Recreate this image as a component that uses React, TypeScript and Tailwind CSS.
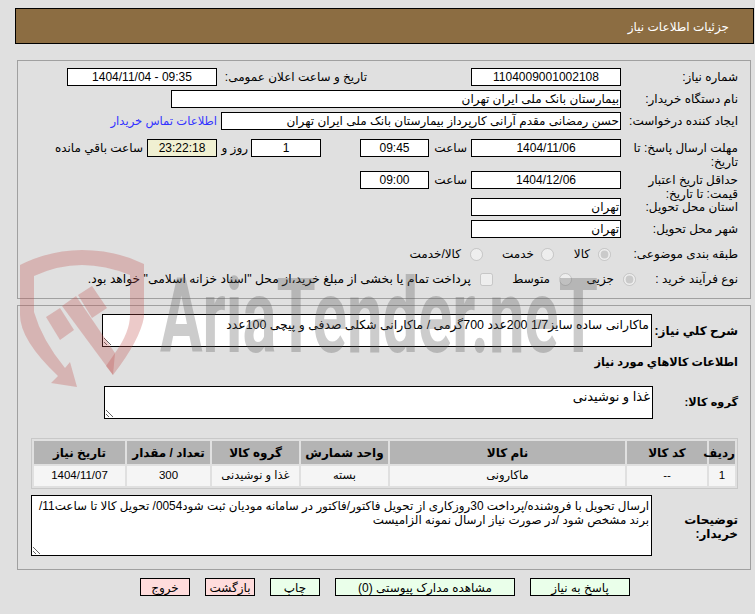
import React, { FC, ReactNode } from 'react';

const boxClass = 'h-[18px] shrink-0 border border-black bg-white leading-[16px] whitespace-nowrap overflow-hidden';

const Box: FC<{ w: string; className?: string; children?: ReactNode }> = ({ w, className, children }) => (
    <div className={`${boxClass} ${w} ${className ?? 'text-center text-[12px]'}`}>{children}</div>
);

const Label: FC<{ children: ReactNode }> = ({ children }) => (
    <div className="w-[117px] shrink-0 text-[12px] leading-[14px] pt-[2px]">{children}</div>
);

const Radio: FC<{ checked?: boolean }> = ({ checked }) => (
    <input type="radio" disabled checked={!!checked} readOnly className="m-0 h-[13px] w-[13px] shrink-0" />
);

const columns = [
    { title: 'رديف', value: '1', w: 'w-[26px]' },
    { title: 'کد کالا', value: '--', w: 'w-[80px]' },
    { title: 'نام کالا', value: 'ماکارونی', w: 'w-[235px]' },
    { title: 'واحد شمارش', value: 'بسته', w: 'w-[87px]' },
    { title: 'گروه کالا', value: 'غذا و نوشیدنی', w: 'w-[87px]' },
    { title: 'تعداد / مقدار', value: '300', w: 'w-[83px]' },
    { title: 'تاریخ نیاز', value: '1404/11/07', w: 'w-[91px]' },
];

const textareaClass = 'shrink-0 border border-black bg-white leading-[14px] px-[2px] py-[3px] outline-none overflow-hidden';

const Watermark: FC = () => (
    <svg dir="ltr" className="absolute left-0 top-0 pointer-events-none" width="755" height="614" viewBox="0 0 755 614">
        <g fill="#c0504d" fillOpacity="0.3">
            <path d="M20 265 Q50 250 82 250 Q116 250 144 264 L144 317 Q140 340 113 375 L106 366 L115 353 Q130 332 130 315 L130 275 Q105 265 82 265 Q58 265 34 276 L34 312 Q42 340 65 368 L70 362 L77 387 L51 383 L58 376 Q20 340 20 315 Z" />
            <path d="M46 317 L60 308 L74 330 L60 340 Z" />
            <path d="M62 306 L76 296 L115 353 L113 375 Z" />
            <path d="M78 295 L92 286 L107 308 L92 318 Z" />
        </g>
        <text x="160" y="352" direction="ltr" textAnchor="start" fontFamily="Roboto, sans-serif" fontWeight="700" fontSize="104" textLength="438" lengthAdjust="spacingAndGlyphs" fill="#555555" fillOpacity="0.3">
            AriaTender.neT
        </text>
    </svg>
);

export default function App() {
    return (
        <div dir="rtl" className="relative h-[614px] w-[755px] overflow-hidden bg-[#e0e0e0] text-black font-['Liberation_Sans','DejaVu_Sans',sans-serif]">
            <div className="h-2" />
            {/* Header */}
            <div className="ml-[15px] mr-px h-[36px] border border-black bg-[#8c6d42] pr-[24px] text-[12px] leading-[37px] text-white">
                جزئیات اطلاعات نیاز
            </div>

            {/* Main info */}
            <div className="ml-[17px] mr-[4px] mt-[16px] h-[239px] border border-[#a0a0a0] pr-[12px] pt-[7px]">
                <div className="flex h-[18px]">
                    <Label>شماره نیاز:</Label>
                    <Box w="w-[150px]">1104009001002108</Box>
                    <div className="mr-[104px] w-[145px] shrink-0 text-[12px] leading-[14px] pt-[2px] whitespace-nowrap">تاریخ و ساعت اعلان عمومی:</div>
                    <Box w="w-[150px]" className="mr-[5px] text-center text-[12px]"><span dir="ltr">1404/11/04 - 09:35</span></Box>
                </div>
                <div className="mt-[4px] flex h-[18px]">
                    <Label>نام دستگاه خریدار:</Label>
                    <Box w="w-[450px]" className="pr-px text-[12px]">بیمارستان بانک ملی ایران تهران</Box>
                </div>
                <div className="mt-[4px] flex h-[18px]">
                    <Label>ایجاد کننده درخواست:</Label>
                    <Box w="w-[400px]" className="pr-px text-[12px]">حسن رمضانی مقدم آرانی کارپرداز بیمارستان بانک ملی ایران تهران</Box>
                    <a className="mr-[4px] whitespace-nowrap text-[11.6px] leading-[14px] pt-[2px] text-[#3333ff]">اطلاعات تماس خریدار</a>
                </div>
                <div className="mt-[9px] flex h-[18px]">
                    <Label>مهلت ارسال پاسخ: تا تاریخ:</Label>
                    <Box w="w-[150px]">1404/11/06</Box>
                    <div className="mr-[4px] w-[34px] shrink-0 pt-[2px] text-[12px] leading-[14px]">ساعت</div>
                    <Box w="w-[69px]" className="mr-[4px] text-center text-[12px]">09:45</Box>
                    <Box w="w-[70px]" className="mr-[39px] text-center text-[12px]">1</Box>
                    <div className="mr-[3px] w-[26px] shrink-0 whitespace-nowrap pt-[2px] text-[12px] leading-[14px]">روز و</div>
                    <Box w="w-[70px]" className="mr-[5px] !bg-[#f0f0d2] text-center text-[12px]">23:22:18</Box>
                    <div className="mr-[4px] whitespace-nowrap pt-[2px] text-[12px] leading-[14px]">ساعت باقي مانده</div>
                </div>
                <div className="mt-[14px] flex h-[18px]">
                    <Label>حداقل تاریخ اعتبار قیمت: تا تاریخ:</Label>
                    <Box w="w-[150px]">1404/12/06</Box>
                    <div className="mr-[4px] w-[34px] shrink-0 pt-[2px] text-[12px] leading-[14px]">ساعت</div>
                    <Box w="w-[69px]" className="mr-[4px] text-center text-[12px]">09:00</Box>
                </div>
                <div className="mt-[9px] flex h-[18px]">
                    <Label>استان محل تحویل:</Label>
                    <Box w="w-[150px]" className="pr-px text-[12px]">تهران</Box>
                </div>
                <div className="mt-[4px] flex h-[18px]">
                    <Label>شهر محل تحویل:</Label>
                    <Box w="w-[150px]" className="pr-px text-[12px]">تهران</Box>
                </div>
                <div className="mt-[7px] flex h-[18px] items-center text-[12px]">
                    <div className="w-[117px] shrink-0">طبقه بندی موضوعی:</div>
                    <div className="mr-[10px] flex"><Radio checked /></div>
                    <div className="mr-[8px] w-[16px] whitespace-nowrap">کالا</div>
                    <div className="mr-[20px] flex"><Radio /></div>
                    <div className="mr-[7px] w-[33px] whitespace-nowrap">خدمت</div>
                    <div className="mr-[18px] flex"><Radio /></div>
                    <div className="mr-[9px] whitespace-nowrap">کالا/خدمت</div>
                </div>
                <div className="mt-[7px] flex h-[18px] items-center text-[12px]">
                    <div className="w-[102px] shrink-0">نوع فرآیند خرید :</div>
                    <Radio checked />
                    <div className="mr-[9px] w-[28px] whitespace-nowrap">جزیی</div>
                    <div className="mr-[14px] flex"><Radio /></div>
                    <div className="mr-[9px] w-[36px] whitespace-nowrap">متوسط</div>
                    <div className="mr-[21px] flex"><input type="checkbox" disabled className="m-0 block h-[13px] w-[13px]" /></div>
                    <div className="mr-[9px] whitespace-nowrap text-[12.3px]">پرداخت تمام یا بخشی از مبلغ خرید،از محل "اسناد خزانه اسلامی" خواهد بود.</div>
                </div>
            </div>

            {/* Goods */}
            <div className="ml-[17px] mr-[4px] mt-[6px] h-[265px] border border-[#a0a0a0] pr-[12px] pt-[8px]">
                <div className="flex h-[33px] items-center">
                    <div className="w-[86px] shrink-0 whitespace-nowrap text-[12px] font-bold">شرح کلي نیاز:</div>
                    <textarea readOnly className={`${textareaClass} h-[33px] w-[550px] text-[12.4px]`} defaultValue="ماکارانی ساده سایز1/7 200عدد 700گرمی / ماکارانی شکلی صدفی و پیچی 100عدد" />
                </div>
                <div className="mt-[8px] h-[14px] text-[11.3px] font-bold leading-[14px]">اطلاعات کالاهاي مورد نیاز</div>
                <div className="mt-[17px] flex h-[33px] items-center">
                    <div className="w-[85px] shrink-0 text-[11.3px] font-bold">گروه کالا:</div>
                    <textarea readOnly className={`${textareaClass} h-[33px] w-[549px] text-[13px]`} defaultValue="غذا و نوشیدنی" />
                </div>
                <table className="mt-[19px] w-[707px] table-fixed border-separate border-spacing-[2px] border border-[#c8c8c8] text-center text-[12px]">
                    <thead>
                        <tr>
                            {columns.map((c) => (
                                <th key={c.title} className={`${c.w} h-[23px] bg-[#b4b4b4] p-0 font-bold`}>{c.title}</th>
                            ))}
                        </tr>
                    </thead>
                    <tbody>
                        <tr>
                            {columns.map((c) => (
                                <td key={c.title} className={`${c.w} h-[20px] bg-[#f5f5f5] p-0 text-[11.5px]`}>{c.value}</td>
                            ))}
                        </tr>
                    </tbody>
                </table>
                <div className="mt-[6px] flex h-[61px]">
                    <div className="w-[86px] shrink-0 pt-[18px] text-[12px] font-bold leading-[14px]">توضیحات خریدار:</div>
                    <textarea readOnly wrap="off" className={`${textareaClass} h-[61px] w-[621px] text-[11.88px]`} defaultValue={'ارسال تحویل با فروشنده/پرداخت 30روزکاری از تحویل فاکتور/فاکتور در سامانه مودیان ثبت شود0054/ تحویل کالا تا ساعت11/\nبرند مشخص شود /در صورت نیاز ارسال نمونه الزامیست'} />
                </div>
            </div>

            {/* Actions */}
            <div className="mt-[8px] mr-[125px] flex gap-[15px] text-[12px]">
                <button className="h-[18px] w-[100px] border border-black bg-[#eaffea]">پاسخ به نیاز</button>
                <button className="h-[18px] w-[180px] border border-black bg-[#eaffea]">مشاهده مدارک پیوستی (0)</button>
                <button className="h-[18px] w-[50px] border border-black bg-[#eaffea]">چاپ</button>
                <button className="h-[18px] w-[50px] border border-black bg-[#ffdcdc]">بازگشت</button>
                <button className="h-[18px] w-[50px] border border-black bg-[#ffdcdc]">خروج</button>
            </div>

            <Watermark />
        </div>
    );
}
